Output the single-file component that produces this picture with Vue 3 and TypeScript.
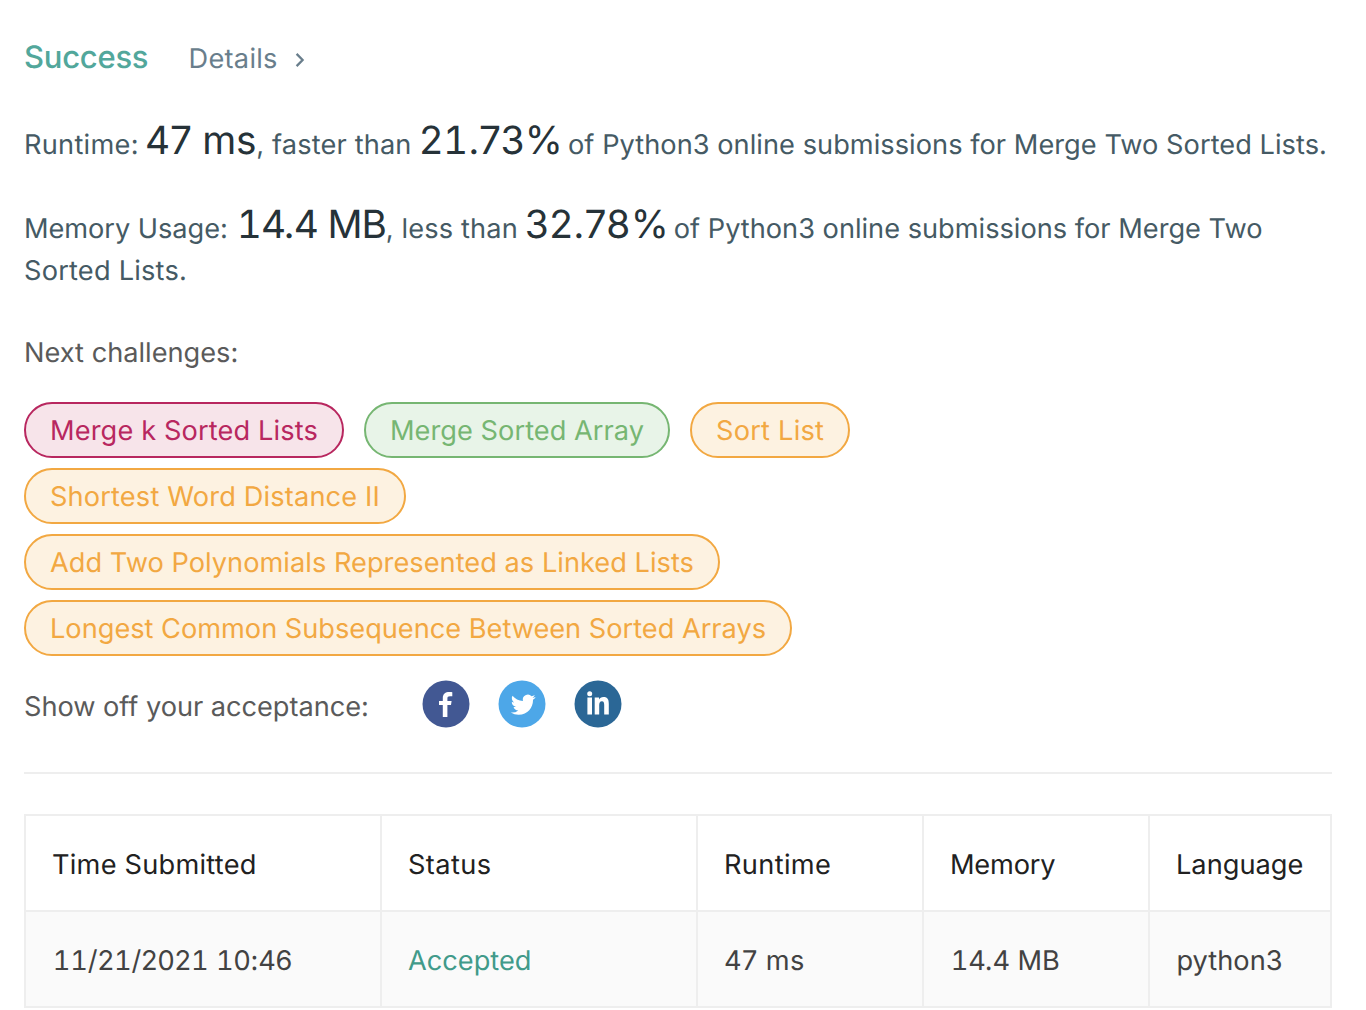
<script setup lang="ts">
interface Challenge { title: string; level: 'hard' | 'easy' | 'medium'; tracking: number }

const challenges: Challenge[] = [
  { title: 'Merge k Sorted Lists', level: 'hard', tracking: 0.13 },
  { title: 'Merge Sorted Array', level: 'easy', tracking: 0.04 },
  { title: 'Sort List', level: 'medium', tracking: 0.21 },
  { title: 'Shortest Word Distance II', level: 'medium', tracking: 0.152 },
  { title: 'Add Two Polynomials Represented as Linked Lists', level: 'medium', tracking: 0.028 },
  { title: 'Longest Common Subsequence Between Sorted Arrays', level: 'medium', tracking: -0.008 },
]

const columns = [
  { label: 'Time Submitted', tracking: 0.23 },
  { label: 'Status', tracking: 0.4 },
  { label: 'Runtime', tracking: 0.34 },
  { label: 'Memory', tracking: -0.2 },
  { label: 'Language', tracking: 0 },
]

// Ones are set on the full figure width, the other glyphs keep their own.
const pieces = (text: string) => text.split(/(1)/).filter(Boolean)
</script>

<template>
  <main class="result">
    <header class="head">
      <h1 class="state">Success</h1>
      <a class="details">Details
        <svg class="chevron" viewBox="0 0 10 16" fill="none"><path d="M1.6 1.9 7.6 8l-6 6.1" stroke="currentColor" stroke-width="2.3" /></svg>
      </a>
    </header>

    <p class="line"><span class="runtime-label">Runtime:</span> <strong class="runtime">47 ms</strong><span class="joint">, faster than</span> <strong class="runtime-rank"><span v-for="(p, i) in pieces('21.73%')" :key="i" :class="{ one: p === '1' }">{{ p }}</span></strong> <span class="tail">of Python3 online submissions for Merge Two Sorted Lists.</span></p>
    <p class="line"><span class="memory-label">Memory Usage:</span> <strong class="memory"><span v-for="(p, i) in pieces('14.4 MB')" :key="i" :class="{ one: p === '1' }">{{ p }}</span></strong><span class="joint">, less than</span> <strong class="memory-rank">32.78%</strong> of Python3 online submissions for Merge Two <span class="last">Sorted Lists.</span></p>

    <p class="label">Next challenges:</p>
    <div class="tags">
      <a v-for="c in challenges" :key="c.title" class="tag" :class="c.level" :style="{ letterSpacing: c.tracking + 'px' }">{{ c.title }}</a>
    </div>

    <div class="share">
      <span class="share-label">Show off your acceptance:</span>
      <svg class="social" viewBox="0 0 48 48"><circle cx="24" cy="24" r="23.5" fill="#425893" /><path fill="#fff" d="M20.8 37V25h-3.8v-4h3.8v-2.8c0-4.3 2.6-6.2 6.6-6.2 1.3 0 2.3.1 2.9.3v4h-2.3c-2 0-2.6.8-2.6 2.2V21h4.2l-.6 4h-3.6v12z" /></svg>
      <svg class="social" viewBox="0 0 48 48"><circle cx="24" cy="24" r="23.5" fill="#4da7e8" /><path fill="#fff" transform="translate(12.8 12.4) scale(1.03)" d="M23.95 4.57a10 10 0 0 1-2.82.78 4.96 4.96 0 0 0 2.16-2.73c-.95.56-2 .96-3.13 1.19a4.92 4.92 0 0 0-8.38 4.48C7.69 8.1 4.07 6.13 1.64 3.16a4.92 4.92 0 0 0 1.52 6.57 4.9 4.9 0 0 1-2.23-.61v.06a4.92 4.92 0 0 0 3.95 4.83 5 5 0 0 1-2.21.08 4.94 4.94 0 0 0 4.6 3.42A9.87 9.87 0 0 1 0 19.54a13.99 13.99 0 0 0 7.55 2.21c9.05 0 14-7.5 14-13.98 0-.21 0-.42-.02-.63a9.94 9.94 0 0 0 2.46-2.55z" /></svg>
      <svg class="social" viewBox="0 0 48 48"><circle cx="24" cy="24" r="23.5" fill="#2b6796" /><path fill="#fff" d="M13.4 17.6H18v16.8h-4.6zM15.7 11.2a2.5 2.5 0 1 1 0 5 2.5 2.5 0 0 1 0-5zM20.7 17.6H25v2c.8-1.3 2.2-2.5 4.5-2.5 4.2 0 5.3 2.7 5.3 6.9v10.4h-4.6v-9.2c0-2.3-.2-4-2.3-4s-2.7 1.8-2.7 4v9.2h-4.5z" /></svg>
    </div>

    <section class="table">
      <div v-for="c in columns" :key="c.label" class="cell th" :style="{ letterSpacing: c.tracking + 'px' }">{{ c.label }}</div>
      <div class="cell td date"><span v-for="(p, i) in pieces('11/21/2021 10:46')" :key="i" :class="{ one: p === '1' }">{{ p }}</span></div>
      <div class="cell td accepted">Accepted</div>
      <div class="cell td time">47 ms</div>
      <div class="cell td size"><span v-for="(p, i) in pieces('14.4 MB')" :key="i" :class="{ one: p === '1' }">{{ p }}</span></div>
      <div class="cell td lang">python3</div>
    </section>
  </main>
</template>

<style>
body { margin: 0; background: #fff; }
</style>

<style scoped>
.result {
  box-sizing: border-box;
  width: 1366px;
  height: 1010px;
  padding: 36px 34px 0 24px;
  overflow: hidden;
  color: #455a64;
  font: 400 27.2px/42px Inter, sans-serif;
  text-rendering: geometricPrecision;
}
.one { font-variant-numeric: tabular-nums; }

.head { display: flex; height: 42px; }
.state {
  width: 164.5px;
  margin: 0;
  color: #52a79b;
  font-size: 31px;
  font-weight: 500;
  line-height: 44px;
  letter-spacing: -.25px;
}
.details {
  display: flex;
  align-items: center;
  height: 46px;
  color: #697e8c;
  letter-spacing: .28px;
}
.chevron { width: 10px; height: 16px; margin: 2px 0 0 17px; }

.line { margin: 46px -10px 0 0; white-space: nowrap; }
.line + .line { margin: 42px 0 0; white-space: normal; }
strong { color: #263238; font-size: 38.8px; font-weight: 400; line-height: 0; }
.runtime-label { letter-spacing: .27px; }
.runtime { margin-left: -1.4px; letter-spacing: -.23px; }
.runtime-rank { margin-right: -2.6px; letter-spacing: .16px; }
.memory-label { letter-spacing: -.04px; }
.memory { margin-left: 1.4px; letter-spacing: -1.09px; }
.memory-rank { margin: 0 -3.2px 0 -.8px; letter-spacing: .47px; }
.joint { letter-spacing: .14px; }
.tail { letter-spacing: .038px; }
.last { letter-spacing: .21px; }

.label { margin: 40px 0 28px; color: #5a5a5a; }
.tags { display: flex; flex-wrap: wrap; gap: 10px 20px; width: 840px; }
.tag {
  box-sizing: border-box;
  height: 56px;
  padding: 0 24px;
  border: 2px solid;
  border-radius: 28px;
  line-height: 54px;
  white-space: nowrap;
}
.hard { color: #b8275f; background: #f7e4ea; }
.easy { color: #76b672; background: #e8f4e8; }
.medium { color: #f2a842; background: #fdf2e1; }

.share {
  display: flex;
  align-items: center;
  box-sizing: border-box;
  height: 118px;
  padding: 2px 0 22px;
  border-bottom: 2px solid #eee;
  color: #5a5a5a;
}
.share-label { width: 398px; padding-top: 5px; line-height: 48px; letter-spacing: -.034px; }
.social { width: 48px; height: 48px; margin-right: 28px; }

.table {
  display: grid;
  grid-template-columns: 356px 316px 226px 226px 182px;
  margin-top: 40px;
  border: solid #eee;
  border-width: 2px 0 0 2px;
}
.cell {
  box-sizing: border-box;
  height: 96px;
  padding-left: 26px;
  border: solid #eee;
  border-width: 0 2px 2px 0;
  line-height: 98px;
}
.th { color: #212121; }
.td { color: #424242; background: #fafafa; }
.td.accepted { color: #419a8a; }
.date { padding-left: 26.8px; letter-spacing: -.14px; }
.time { letter-spacing: .4px; }
.size { padding-left: 26.8px; letter-spacing: -.1px; }
.lang { padding-left: 26.4px; letter-spacing: .05px; }
</style>
